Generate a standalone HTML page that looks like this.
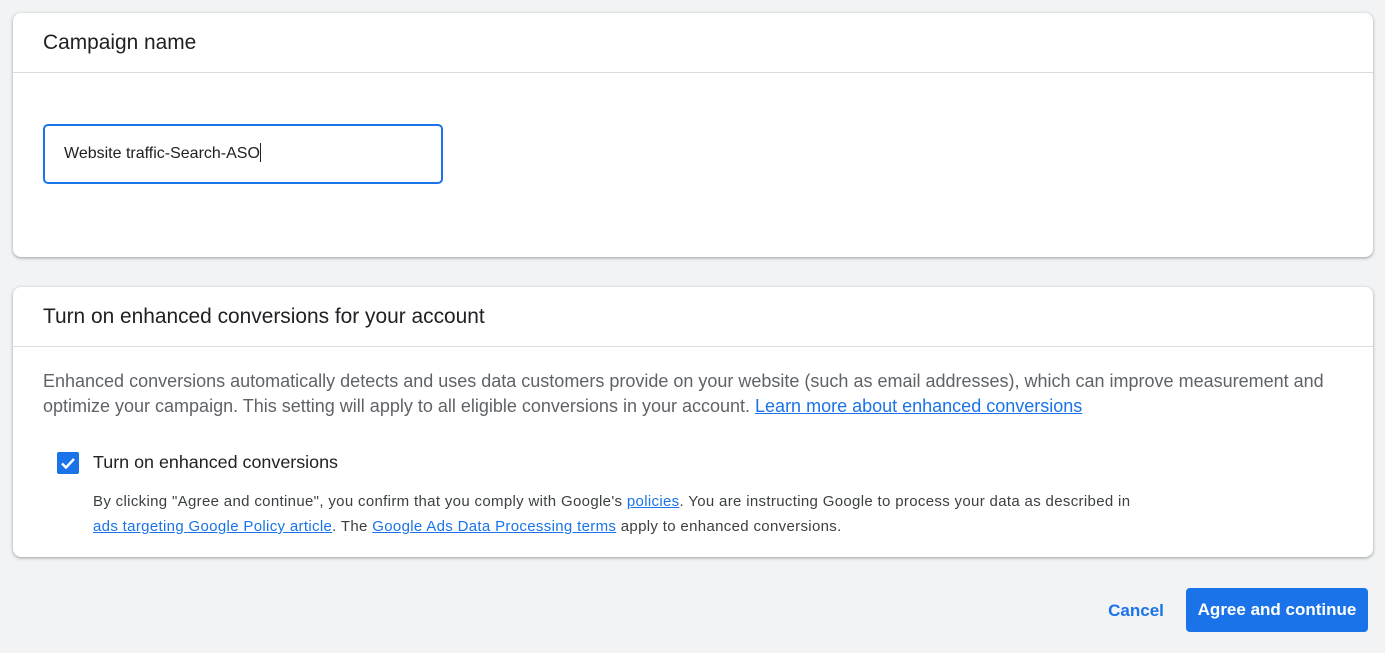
<!DOCTYPE html>
<html><head><style>
body{margin:0;background:#f1f3f4;font-family:"Liberation Sans",Arial,sans-serif;width:1385px;height:653px;overflow:hidden;position:relative}
.card{position:absolute;left:13px;width:1360px;background:#fff;border-radius:8px;box-shadow:0 1px 2px rgba(60,64,67,.3),0 1px 3px 1px rgba(60,64,67,.15)}
.hd{height:60px;border-bottom:1px solid #dadce0;box-sizing:border-box;padding-left:30px;font-size:20.9px;color:#202124;line-height:60px;white-space:nowrap}
a{color:#1a73e8;text-decoration:underline}
</style></head><body>
<div class="card" style="top:13px;height:244px">
<div class="hd">Campaign name</div>
<div style="position:absolute;left:30px;top:111px;width:400px;height:60px;box-sizing:border-box;border:2px solid #1a73e8;border-radius:5px;padding-left:19px;line-height:56px;font-size:16px;color:#202124">Website traffic-Search-ASO<span style="display:inline-block;width:1px;height:19px;background:#202124;vertical-align:-4px"></span></div>
</div>
<div class="card" style="top:287px;height:270px">
<div class="hd">Turn on enhanced conversions for your account</div>
<div style="position:absolute;left:30px;top:82px;width:1320px;font-size:18px;line-height:25px;color:#5f6368;white-space:nowrap">Enhanced conversions automatically detects and uses data customers provide on your website (such as email addresses), which can improve measurement and<br>optimize your campaign. This setting will apply to all eligible conversions in your account. <a>Learn more about enhanced conversions</a></div>
<div style="position:absolute;left:44px;top:165px;width:22px;height:22px;background:#1a73e8;border-radius:2px">
<svg width="22" height="22" viewBox="0 0 22 22"><path d="M5 11.5l4 4 8-8.5" stroke="#fff" stroke-width="2.4" fill="none"/></svg></div>
<div style="position:absolute;left:80px;top:164px;font-size:17.9px;line-height:22px;color:#202124">Turn on enhanced conversions</div>
<div style="position:absolute;left:80px;top:202px;width:1200px;font-size:15px;letter-spacing:0.33px;line-height:25px;color:#3c4043;white-space:nowrap">By clicking "Agree and continue", you confirm that you comply with Google's <a>policies</a>. You are instructing Google to process your data as described in<br><a>ads targeting Google Policy article</a>. The <a>Google Ads Data Processing terms</a> apply to enhanced conversions.</div>
</div>
<div style="position:absolute;left:1100px;top:589px;width:72px;height:44px;line-height:44px;text-align:center;color:#1a73e8;font-size:17px;font-weight:bold">Cancel</div>
<div style="position:absolute;left:1186px;top:588px;width:182px;height:44px;line-height:44px;text-align:center;background:#1a73e8;color:#fff;border-radius:4px;font-size:17px;font-weight:bold">Agree and continue</div>
</body></html>
